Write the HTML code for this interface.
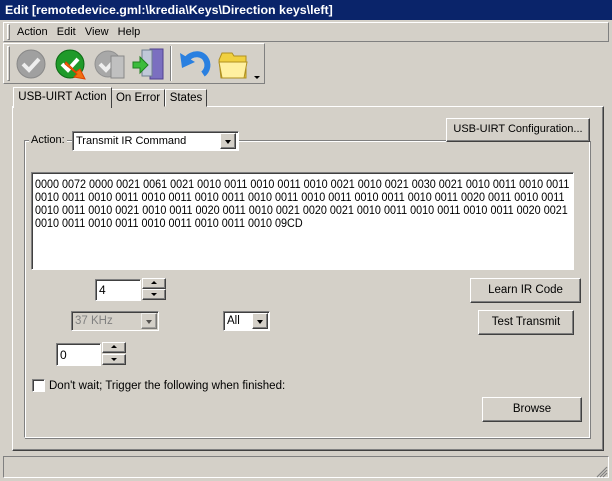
<!DOCTYPE html>
<html><head><meta charset="utf-8"><style>
*{margin:0;padding:0;box-sizing:border-box}
body{width:612px;height:481px;background:#d4d0c8;font-family:"Liberation Sans",sans-serif;font-size:11px;color:#000;position:relative;overflow:hidden}
.a{position:absolute}
.btn{position:absolute;background:#d4d0c8;border:1px solid;border-color:#fff #404040 #404040 #fff;box-shadow:inset -1px -1px 0 #808080;text-align:center;font-size:11px}
.sunk{position:absolute;background:#fff;border:1px solid;border-color:#808080 #fff #fff #808080;box-shadow:inset 1px 1px 0 #404040}
.dd{position:absolute;width:16px;background:#d4d0c8;border:1px solid;border-color:#fff #404040 #404040 #fff;box-shadow:inset -1px -1px 0 #808080}
.dd:after{content:"";position:absolute;left:4px;top:6px;border:3.5px solid transparent;border-top:4px solid #000}
.sp{position:absolute;width:24px;height:11px;background:#d4d0c8;border:1px solid;border-color:#fff #404040 #404040 #fff;box-shadow:inset -1px -1px 0 #808080}
.up:after{content:"";position:absolute;left:8px;top:2px;border:3px solid transparent;border-bottom:3px solid #000;border-top:0}
.dn:after{content:"";position:absolute;left:8px;top:3px;border:3px solid transparent;border-top:3px solid #000;border-bottom:0}
.ta div{white-space:nowrap;transform:scaleX(0.9);transform-origin:0 0;height:13px;line-height:13px}
</style></head><body>
<div class="a" style="left:0;top:0;width:612px;height:20px;background:#0a246a;color:#fff;font-weight:bold;font-size:12.4px;line-height:20px;padding-left:5px">Edit [remotedevice.gml:\kredia\Keys\Direction keys\left]</div>
<div class="a" style="left:3px;top:22px;width:606px;height:20px;border:1px solid;border-color:#fff #808080 #808080 #fff"></div>
<div class="a" style="left:7px;top:24px;width:3px;height:16px;border:1px solid;border-color:#fff #808080 #808080 #fff"></div>
<div class="a" style="left:17px;top:25px;line-height:14px">Action&nbsp;&nbsp;&nbsp;Edit&nbsp;&nbsp;&nbsp;View&nbsp;&nbsp;&nbsp;Help</div>
<div class="a" style="left:3px;top:43px;width:262px;height:41px;border:1px solid;border-color:#fff #808080 #808080 #fff"></div>
<div class="a" style="left:7px;top:46px;width:3px;height:35px;border:1px solid;border-color:#fff #808080 #808080 #fff"></div>
<div class="a" style="left:170px;top:46px;width:2px;height:35px;border-left:1px solid #808080;border-right:1px solid #fff"></div>
<svg class="a" style="left:0;top:40px" width="270" height="46">
<circle cx="31" cy="24" r="14" fill="#a0a0a0" stroke="#888"/><path d="M23 24l6 6 10-11" stroke="#eee" stroke-width="4" fill="none"/>
<circle cx="70" cy="24" r="14" fill="#1f9a2a" stroke="#0c6a14"/><path d="M62 24l6 6 10-11" stroke="#fff" stroke-width="4" fill="none"/><path d="M66 22l10 10 4-3 5 10-11-2 3-3-12-10z" fill="#f07010" stroke="#e04000"/>
<circle cx="108" cy="24" r="13" fill="#a8a8a8" stroke="#909090"/><path d="M100 24l6 6 9-10" stroke="#eee" stroke-width="4" fill="none"/><rect x="111" y="16" width="13" height="22" fill="#c0c0c0" stroke="#888"/>
<rect x="150" y="9" width="13" height="30" fill="#7b6fc0" stroke="#504090"/><rect x="142" y="10" width="10" height="26" fill="#c0c8d8" stroke="#708090"/><path d="M133 22h7v-5l8 8-8 8v-5h-7z" fill="#3cbc3c" stroke="#208020"/>
<path d="M186 20c6-8 18-8 21 2 2 8-4 12-4 12" stroke="#2a80e0" stroke-width="6" fill="none"/><path d="M180 13l2 15 13-6z" fill="#2a80e0"/>
<path d="M219 20l3-7h10l2 3h12v22h-25z" fill="#f0d040" stroke="#b09020"/><path d="M219 22h28l-3 16h-22z" fill="#fff0a0" stroke="#b09020"/>
<path d="M254 36h6l-3 3z" fill="#000"/>
</svg>
<div class="a" style="left:12px;top:106px;width:592px;height:345px;border:1px solid;border-color:#fff #404040 #404040 #fff;box-shadow:inset -1px -1px 0 #808080"></div>
<div class="a" style="left:111px;top:89px;width:54px;height:18px;border:1px solid;border-color:#fff #404040 transparent #fff;line-height:16px;text-align:center;background:#d4d0c8;font-size:11.5px">On Error</div>
<div class="a" style="left:165px;top:89px;width:42px;height:18px;border:1px solid;border-color:#fff #404040 transparent #fff;line-height:16px;text-align:center;background:#d4d0c8;font-size:11.5px">States</div>
<div class="a" style="left:13px;top:87px;width:99px;height:21px;border:1px solid;border-color:#fff #404040 transparent #fff;border-bottom:none;line-height:18px;text-align:center;background:#d4d0c8;font-size:11.5px;white-space:nowrap">USB-UIRT Action</div>
<div class="a" style="left:24px;top:140px;width:566px;height:298px;border:1px solid;border-color:#808080 #fff #fff #808080;box-shadow:inset 1px 1px 0 #fff,1px 1px 0 #808080"></div>
<div class="a" style="left:29px;top:133px;background:#d4d0c8;padding:0 2px;line-height:14px">Action:</div>
<div class="sunk" style="left:72px;top:131px;width:167px;height:20px;padding:3px 0 0 3px">Transmit IR Command</div>
<div class="dd" style="left:220px;top:133px;height:16px"></div>
<div class="btn" style="left:446px;top:118px;width:144px;height:24px;line-height:21px;font-size:11px">USB-UIRT Configuration...</div>
<div class="sunk ta" style="left:31px;top:172px;width:543px;height:98px;padding:5px 0 0 3px;font-size:12px">
<div>0000 0072 0000 0021 0061 0021 0010 0011 0010 0011 0010 0021 0010 0021 0030 0021 0010 0011 0010 0011</div>
<div>0010 0011 0010 0011 0010 0011 0010 0011 0010 0011 0010 0011 0010 0011 0010 0011 0020 0011 0010 0011</div>
<div>0010 0011 0010 0021 0010 0011 0020 0011 0010 0021 0020 0021 0010 0011 0010 0011 0010 0011 0020 0021</div>
<div>0010 0011 0010 0011 0010 0011 0010 0011 0010 09CD</div>
</div>
<div class="sunk" style="left:95px;top:279px;width:46px;height:22px;padding:3px 0 0 3px;font-size:12px">4</div>
<div class="sp up" style="left:142px;top:278px"></div><div class="sp dn" style="left:142px;top:289px"></div>
<div class="sunk" style="left:71px;top:311px;width:88px;height:20px;padding:3px 0 0 3px;background:#d4d0c8;color:#808080;font-size:11.5px">37 KHz</div>
<div class="dd" style="left:141px;top:313px;height:16px;opacity:.6"></div>
<div class="sunk" style="left:223px;top:311px;width:47px;height:20px;padding:3px 0 0 3px;font-size:11.5px">All</div>
<div class="dd" style="left:252px;top:313px;height:16px"></div>
<div class="sunk" style="left:56px;top:343px;width:45px;height:23px;padding:4px 0 0 3px;font-size:12px">0</div>
<div class="sp up" style="left:102px;top:342px"></div><div class="sp dn" style="left:102px;top:354px"></div>
<div class="sunk" style="left:32px;top:379px;width:13px;height:13px"></div>
<div class="a" style="left:49px;top:379px;line-height:14px;font-size:11.5px">Don't wait; Trigger the following when finished:</div>
<div class="btn" style="left:470px;top:278px;width:111px;height:25px;line-height:22px;font-size:11.5px">Learn IR Code</div>
<div class="btn" style="left:478px;top:310px;width:96px;height:25px;line-height:22px;font-size:11.5px">Test Transmit</div>
<div class="btn" style="left:482px;top:397px;width:100px;height:25px;line-height:22px;font-size:11.5px">Browse</div>
<div class="a" style="left:3px;top:456px;width:606px;height:22px;border:1px solid;border-color:#808080 #fff #fff #808080"></div>
<svg class="a" style="left:596px;top:466px" width="12" height="12"><path d="M11 1L1 11M11 4L4 11M11 7L7 11" stroke="#808080" stroke-width="1.2"/></svg>
</body></html>
